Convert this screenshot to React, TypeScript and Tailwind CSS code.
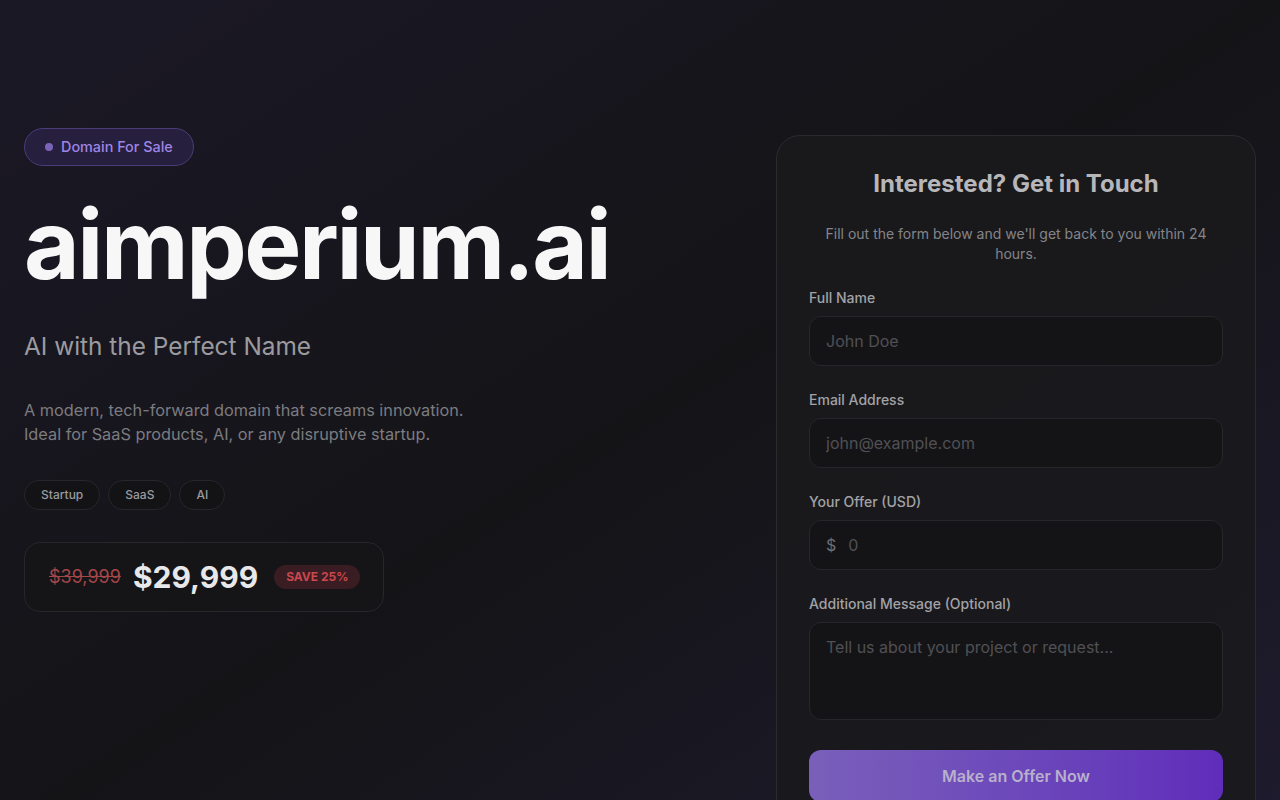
const tags = ['Startup', 'SaaS', 'AI'];

const fields = [
  { label: 'Full Name', placeholder: 'John Doe', type: 'text' },
  { label: 'Email Address', placeholder: 'john@example.com', type: 'email' },
];

export default function App() {
  return (
    <div
      className="min-h-screen w-full overflow-hidden bg-gradient-to-br from-[#1b1826] via-[#141417] to-[#1f1b2f] text-white"
      style={{ fontFamily: "Inter, 'Noto Sans', sans-serif" }}
    >
      <div className="mx-auto max-w-7xl px-6 pt-[128px]">
        <div className="grid grid-cols-[1fr_480px] items-start gap-10">
          {/* Left: domain pitch */}
          <div>
            <div className="inline-flex h-[38px] items-center gap-2 rounded-full border border-[#4a3d78] bg-[#261f3d] px-5">
              <span className="h-2 w-2 rounded-full bg-[#7a62b8]" />
              <span className="text-[14.4px] font-medium text-[#9d85e6]">Domain For Sale</span>
            </div>

            <h1 className="mt-[26px] text-8xl font-bold leading-[1.1] tracking-tight text-[#f7f7f7]">
              aimperium.ai
            </h1>

            <p className="mt-8 text-[24.4px] leading-8 text-[#9b9b9f]">AI with the Perfect Name</p>

            <p className="mt-9 text-[16.3px] leading-6 text-[#7c7c80]">
              A modern, tech-forward domain that screams innovation.
              <br />
              Ideal for SaaS products, AI, or any disruptive startup.
            </p>

            <div className="mt-[34px] flex gap-2">
              {tags.map((tag) => (
                <span
                  key={tag}
                  className="flex h-[30px] items-center rounded-full border border-[#26262b] bg-[#131316] px-4 text-xs font-medium text-[#9a9a9e]"
                >
                  {tag}
                </span>
              ))}
            </div>

            <div className="mt-8 flex h-[70px] w-[360px] items-center gap-3 rounded-2xl border border-[#26262b] bg-[#151518] px-6">
              <span className="text-lg text-[#a4454a] line-through">$39,999</span>
              <span className="text-3xl font-bold text-[#e8e8ea]">$29,999</span>
              <span className="ml-1 whitespace-nowrap rounded-full bg-[#3a1d22] px-3 py-1 text-xs font-bold text-[#c9474d]">
                SAVE 25%
              </span>
            </div>
          </div>

          {/* Right: contact form */}
          <div className="mt-[7px] rounded-3xl border border-[#2a2a2f] bg-[#19191d]/90 px-8 pb-10 pt-8">
            <h2 className="text-center text-2xl font-bold text-[#b7b7ba]">Interested? Get in Touch</h2>
            <p className="mx-auto mt-6 text-center text-sm leading-5 text-[#858589]">
              Fill out the form below and we'll get back to you within 24 hours.
            </p>

            <form className="mt-[24px] space-y-6" onSubmit={(e) => e.preventDefault()}>
              {fields.map((f) => (
                <div key={f.label}>
                  <label className="mb-2 block text-sm font-medium text-[#a2a2a6]">{f.label}</label>
                  <input
                    type={f.type}
                    placeholder={f.placeholder}
                    className="h-[50px] w-full rounded-xl border border-[#26262b] bg-[#141417] px-4 text-base text-white outline-none placeholder:text-[#505054]"
                  />
                </div>
              ))}

              <div>
                <label className="mb-2 block text-sm font-medium text-[#a2a2a6]">Your Offer (USD)</label>
                <div className="flex h-[50px] w-full items-center gap-3 rounded-xl border border-[#26262b] bg-[#141417] px-4">
                  <span className="text-base text-[#6e6e72]">$</span>
                  <input
                    type="number"
                    placeholder="0"
                    className="w-full bg-transparent text-base text-white outline-none placeholder:text-[#505054]"
                  />
                </div>
              </div>

              <div>
                <label className="mb-2 block text-sm font-medium text-[#a2a2a6]">
                  Additional Message (Optional)
                </label>
                <textarea
                  rows={3}
                  placeholder="Tell us about your project or request..."
                  className="block h-[98px] w-full resize-none rounded-xl border border-[#26262b] bg-[#141417] px-4 py-3 text-base text-white outline-none placeholder:text-[#505054]"
                />
              </div>

              <button
                type="submit"
                className="!mt-[6px] h-[52px] w-full rounded-xl bg-gradient-to-r from-[#7a5fba] to-[#602cba] text-base font-semibold text-[#b8b0cc]"
              >
                Make an Offer Now
              </button>
            </form>
          </div>
        </div>
      </div>
    </div>
  );
}
